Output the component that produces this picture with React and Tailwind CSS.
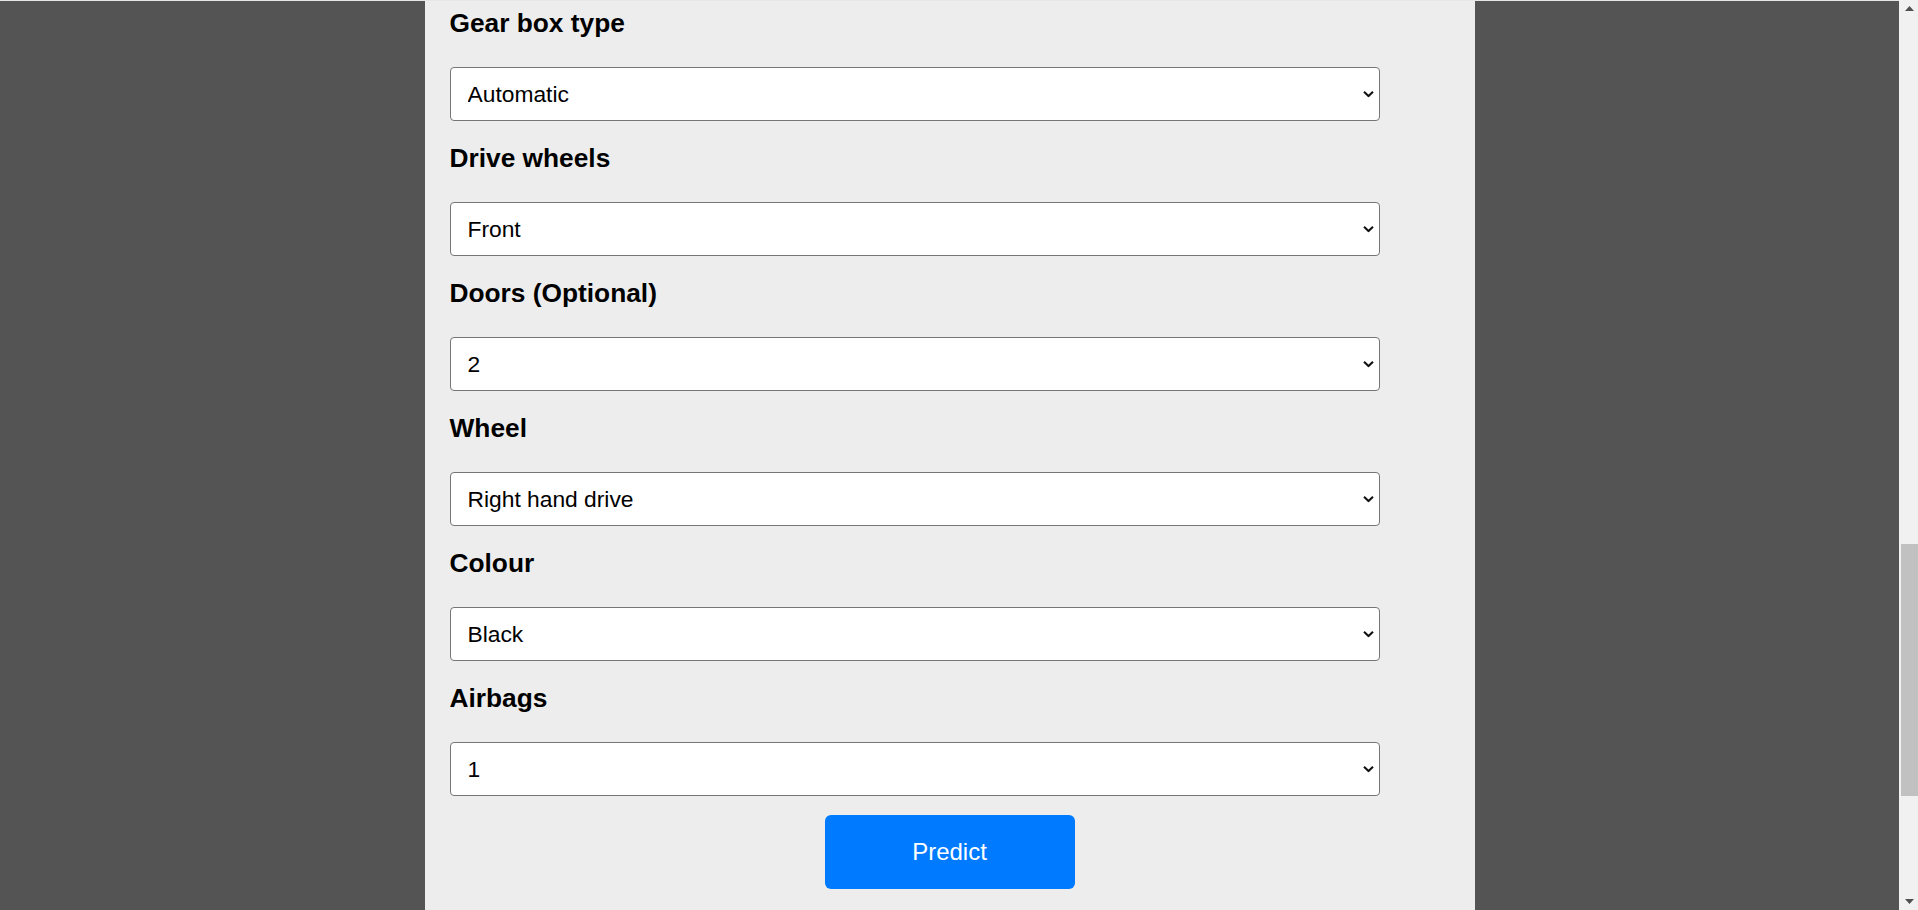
import React, { useState } from 'react';

const fields = [
  { id: 'gearbox', label: 'Gear box type', options: ['Automatic', 'Manual', 'Tiptronic', 'Variator'] },
  { id: 'drive', label: 'Drive wheels', options: ['Front', 'Rear', '4x4'] },
  { id: 'doors', label: 'Doors (Optional)', options: ['2', '4', '>5'] },
  { id: 'wheel', label: 'Wheel', options: ['Right hand drive', 'Left wheel'] },
  { id: 'colour', label: 'Colour', options: ['Black', 'White', 'Silver', 'Grey', 'Blue', 'Red'] },
  { id: 'airbags', label: 'Airbags', options: ['1', '2', '4', '6', '8', '10', '12'] },
];

const Chevron = () => (
  <svg
    className="absolute right-[6px] top-1/2 -translate-y-1/2 pointer-events-none"
    width="11"
    height="7"
    viewBox="0 0 11 7"
    fill="none"
  >
    <path d="M1 1.2 L5.5 5.5 L10 1.2" stroke="#111" strokeWidth="2" />
  </svg>
);

const App = () => {
  const [values, setValues] = useState(
    Object.fromEntries(fields.map((f) => [f.id, f.options[0]]))
  );

  return (
    <div className="h-[910px] w-full overflow-hidden flex bg-[#545454] font-['Liberation_Sans',Arial,sans-serif]">
      <div className="flex-1 flex justify-center border-t border-[#e6e6e6]">
        <div className="w-[1050px] h-full bg-[#ededed] px-[25px] pt-[7px] flex flex-col">
          <form className="flex flex-col gap-[22px]" onSubmit={(e) => e.preventDefault()}>
            {fields.map((f) => (
              <div key={f.id} className="flex flex-col">
                <label htmlFor={f.id} className="text-[26.3px] leading-[30px] font-bold text-black">
                  {f.label}
                </label>
                <div className="relative mt-[29px] w-[930px]">
                  <select
                    id={f.id}
                    value={values[f.id]}
                    onChange={(e) => setValues({ ...values, [f.id]: e.target.value })}
                    className="appearance-none w-full h-[54px] bg-white border border-[#767676] rounded-[4px] pl-[17px] pr-8 text-[22.8px] text-black outline-none font-['Liberation_Sans',Arial,sans-serif]"
                  >
                    {f.options.map((o) => (
                      <option key={o} value={o}>{o}</option>
                    ))}
                  </select>
                  <Chevron />
                </div>
              </div>
            ))}
          </form>
          <button
            type="button"
            className="self-center mt-[19px] w-[250px] h-[74px] bg-[#007bff] rounded-[6px] text-white text-[24px]"
          >
            Predict
          </button>
        </div>
      </div>
      <div className="w-[19px] h-full bg-[#f1f1f1] flex flex-col items-end">
        <div className="h-[17px] w-[17px] flex items-center justify-center">
          <svg width="9" height="5" viewBox="0 0 9 5"><path d="M0 5 L4.5 0 L9 5 Z" fill="#505050" /></svg>
        </div>
        <div className="mt-[527px] w-[17px] h-[252px] bg-[#c1c1c1]" />
        <div className="mt-auto h-[17px] w-[17px] flex items-center justify-center">
          <svg width="9" height="5" viewBox="0 0 9 5"><path d="M0 0 L4.5 5 L9 0 Z" fill="#505050" /></svg>
        </div>
      </div>
    </div>
  );
};

export default App;
